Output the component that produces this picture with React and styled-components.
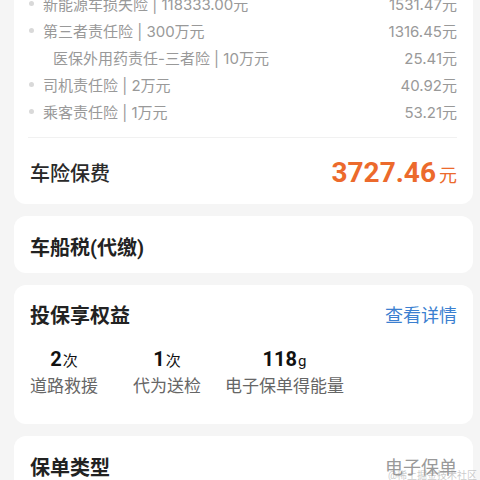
import React from "react";
import styled, { createGlobalStyle } from "styled-components";

const Global = createGlobalStyle`
  html, body { margin: 0; padding: 0; background: #f5f5f5; }
  body { font-family: Roboto, "Noto Sans CJK SC", "Noto Sans", sans-serif; overflow: hidden; }
`;

const Page = styled.div`
  display: flex;
  flex-direction: column;
  gap: 12px;
  padding: 0 7px 0 14px;
  margin-top: -24px;
  height: 520px;
  position: relative;
`;

const Card = styled.div`
  background: #fff;
  border-radius: 12px;
  padding: ${(p) => p.$pad || "16px 16px 13px"};
  position: relative;
`;

const List = styled.div`
  display: flex;
  flex-direction: column;
`;

const Row = styled.div`
  display: flex;
  align-items: center;
  height: 27px;
  font-family: Inter, "Noto Sans CJK SC", sans-serif;
  font-size: 15px;
  color: #999;
  padding-left: ${(p) => (p.$sub ? "23px" : "0")};
`;

const Dot = styled.span`
  width: 5px;
  height: 5px;
  border-radius: 50%;
  background: #d9d9d9;
  margin: 0 9px 0 -1px;
  flex: none;
`;

const RowLabel = styled.span`
  flex: 1;
  white-space: nowrap;
`;

const RowValue = styled.span`
  white-space: nowrap;
`;

const Divider = styled.div`
  height: 1px;
  background: #f1f1f1;
  margin-top: 12px;
  margin-left: -2px;
`;

const TotalRow = styled.div`
  display: flex;
  align-items: center;
  justify-content: space-between;
  height: 36px;
  padding-top: 16px;
`;

const TotalLabel = styled.span`
  font-size: 20px;
  font-weight: 500;
  color: #2a2a2a;
`;

const Amount = styled.span`
  color: #ec6a2c;
  font-size: 28px;
  font-weight: 700;
  display: flex;
  align-items: baseline;
`;

const Unit = styled.span`
  font-size: 18px;
  font-weight: 400;
  margin-left: 3px;
`;

const Header = styled.div`
  display: flex;
  align-items: center;
  justify-content: space-between;
  height: 28px;
`;

const Title = styled.span`
  font-size: 20px;
  font-weight: 700;
  color: #222;
`;

const Link = styled.span`
  font-size: 18px;
  color: ${(p) => p.$color || "#3b7fd0"};
`;

const Stats = styled.div`
  display: flex;
  margin-top: 16px;
`;

const Stat = styled.div`
  display: flex;
  flex-direction: column;
  align-items: center;
  margin-left: ${(p) => p.$ml || 0}px;
`;

const StatNum = styled.div`
  height: 30px;
  display: flex;
  align-items: baseline;
  font-size: 20px;
  font-weight: 700;
  color: #111;
  line-height: 30px;
`;

const StatUnit = styled.span`
  font-size: 15px;
  font-weight: 400;
  margin-left: 1px;
`;

const StatLabel = styled.div`
  font-size: 17px;
  color: #666;
  line-height: 24px;
  white-space: nowrap;
`;

const Watermark = styled.span`
  position: absolute;
  right: -4px;
  top: 31px;
  font-size: 10px;
  color: rgba(150, 150, 150, 0.5);
  white-space: nowrap;
`;

const items = [
  { label: "新能源车损失险 | 118333.00元", value: "1531.47元" },
  { label: "第三者责任险 | 300万元", value: "1316.45元" },
  { label: "医保外用药责任-三者险 | 10万元", value: "25.41元", sub: true },
  { label: "司机责任险 | 2万元", value: "40.92元" },
  { label: "乘客责任险 | 1万元", value: "53.21元" },
];

export default function App() {
  return (
    <>
      <Global />
      <Page>
        <Card $pad="14px 16px 14px">
          <List>
            {items.map((it) => (
              <Row key={it.label} $sub={it.sub}>
                {!it.sub && <Dot />}
                <RowLabel>{it.label}</RowLabel>
                <RowValue>{it.value}</RowValue>
              </Row>
            ))}
          </List>
          <Divider />
          <TotalRow>
            <TotalLabel>车险保费</TotalLabel>
            <Amount>
              3727.46<Unit>元</Unit>
            </Amount>
          </TotalRow>
        </Card>
        <Card>
          <Header>
            <Title>车船税(代缴)</Title>
          </Header>
        </Card>
        <Card $pad="15px 16px 26px">
          <Header>
            <Title>投保享权益</Title>
            <Link>查看详情</Link>
          </Header>
          <Stats>
            <Stat>
              <StatNum>
                2<StatUnit>次</StatUnit>
              </StatNum>
              <StatLabel>道路救援</StatLabel>
            </Stat>
            <Stat $ml={35}>
              <StatNum>
                1<StatUnit>次</StatUnit>
              </StatNum>
              <StatLabel>代为送检</StatLabel>
            </Stat>
            <Stat $ml={24}>
              <StatNum>
                118<StatUnit>g</StatUnit>
              </StatNum>
              <StatLabel>电子保单得能量</StatLabel>
            </Stat>
          </Stats>
        </Card>
        <Card>
          <Header>
            <Title>保单类型</Title>
            <Link $color="#999">电子保单</Link>
          </Header>
          <Watermark>@稀土掘金技术社区</Watermark>
        </Card>
      </Page>
    </>
  );
}
